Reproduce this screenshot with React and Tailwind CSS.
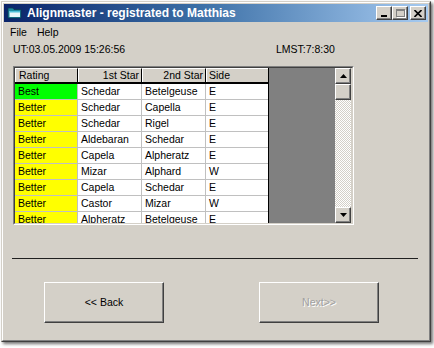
const rows = [
  ['Best', 'Schedar', 'Betelgeuse', 'E'],
  ['Better', 'Schedar', 'Capella', 'E'],
  ['Better', 'Schedar', 'Rigel', 'E'],
  ['Better', 'Aldebaran', 'Schedar', 'E'],
  ['Better', 'Capela', 'Alpheratz', 'E'],
  ['Better', 'Mizar', 'Alphard', 'W'],
  ['Better', 'Capela', 'Schedar', 'E'],
  ['Better', 'Castor', 'Mizar', 'W'],
  ['Better', 'Alpheratz', 'Betelgeuse', 'E'],
];

const raised =
  'border border-t-white border-l-white border-r-[#404040] border-b-[#404040] shadow-[inset_-1px_-1px_0_#808080] bg-[#d4d0c8]';

function TitleButton({ children, className = '' }) {
  return (
    <div className={`${raised} w-[16px] h-[14px] flex items-center justify-center ${className}`}>
      {children}
    </div>
  );
}

function Arrow({ up }) {
  return (
    <svg width="7" height="4" viewBox="0 0 7 4">
      {up ? <path d="M3.5 0 L7 4 L0 4 Z" fill="#000" /> : <path d="M0 0 L7 0 L3.5 4 Z" fill="#000" />}
    </svg>
  );
}

export default function App() {
  return (
    <div className="w-[434px] h-[348px] bg-white overflow-hidden" style={{ fontFamily: '"Liberation Sans", Arial, sans-serif' }}>
      <div className="ml-[1px] mt-[1px] w-[430px] h-[341px] border border-t-[#d4d0c8] border-l-[#d4d0c8] border-r-[#404040] border-b-[#404040] shadow-[2px_2px_3px_rgba(0,0,0,0.55)]">
        <div className="h-full border border-t-white border-l-white border-r-[#808080] border-b-[#808080] bg-[#d4d0c8] p-[1px] flex flex-col">
          {/* title bar */}
          <div className="h-[18px] flex items-center bg-[linear-gradient(90deg,#0a246a_0%,#3a6ea5_45%,#a6caf0_100%)] pl-[3px] pr-[2px]">
            <svg width="16" height="14" viewBox="0 0 16 14" className="mr-[4px]">
              <path d="M1 2 H6 L7 3.5 H14 V12 H1 Z" fill="#1c8aa0" stroke="#0a3a50" strokeWidth="0.8" />
              <path d="M2.5 5 H13 V11 H2.5 Z" fill="#e8f6fa" />
              <path d="M2.5 5 H13 V6.5 H2.5 Z" fill="#4fc0d8" />
            </svg>
            <span className="text-white font-bold text-[12px] leading-none">Alignmaster - registrated to Matthias</span>
            <div className="ml-auto flex items-center">
              <TitleButton>
                <div className="w-[6px] h-[2px] bg-black mt-[6px] -ml-[1px]" />
              </TitleButton>
              <TitleButton>
                <div className="w-[9px] h-[8px] border border-[#808080] border-t-2 shadow-[1px_1px_0_#fff]" />
              </TitleButton>
              <TitleButton className="ml-[2px]">
                <svg width="8" height="7" viewBox="0 0 8 7">
                  <path d="M0.5 0 L7.5 7 M7.5 0 L0.5 7" stroke="#000" strokeWidth="1.6" />
                </svg>
              </TitleButton>
            </div>
          </div>

          {/* menu */}
          <div className="mt-[3px] h-[16px] flex items-center text-[10.5px] text-black pl-[6px] gap-[10px]">
            <span>File</span>
            <span>Help</span>
          </div>

          {/* status line */}
          <div className="mt-[2px] h-[14px] flex items-center text-[10.5px] text-black pl-[9px]">
            <span className="w-[263px]">UT:03.05.2009 15:26:56</span>
            <span>LMST:7:8:30</span>
          </div>

          {/* grid */}
          <div className="mt-[9px] ml-[9px] w-[341px] h-[159px] border border-t-[#808080] border-l-[#808080] border-r-white border-b-white">
            <div className="h-full border border-t-[#404040] border-l-[#404040] border-r-[#d4d0c8] border-b-[#d4d0c8] flex overflow-hidden text-[10.5px] text-black">
              <div className="w-[254px] bg-white border-r border-black flex flex-col">
                <div className="h-[16px] flex shrink-0 border-b-2 border-black">
                  <div className="w-[63px] bg-[#d4d0c8] border-r border-black border-t border-t-white border-l border-l-white pl-[3px] flex items-center">Rating</div>
                  <div className="w-[64px] bg-[#d4d0c8] border-r border-black border-t border-t-white border-l border-l-white pr-[2px] flex items-center justify-end">1st Star</div>
                  <div className="w-[64px] bg-[#d4d0c8] border-r border-black border-t border-t-white border-l border-l-white pr-[2px] flex items-center justify-end">2nd Star</div>
                  <div className="flex-1 bg-[#d4d0c8] border-t border-t-white border-l border-l-white pl-[2px] flex items-center">Side</div>
                </div>
                {rows.map((r, i) => (
                  <div key={i} className="h-[16px] flex shrink-0 border-b border-[#c0c0c0]">
                    <div className={`w-[63px] border-r border-[#c0c0c0] pl-[3px] flex items-center ${i === 0 ? 'bg-[#00ff00]' : 'bg-[#ffff00]'}`}>{r[0]}</div>
                    <div className="w-[64px] border-r border-[#c0c0c0] pl-[3px] flex items-center">{r[1]}</div>
                    <div className="w-[64px] border-r border-[#c0c0c0] pl-[3px] flex items-center">{r[2]}</div>
                    <div className="flex-1 pl-[3px] flex items-center">{r[3]}</div>
                  </div>
                ))}
              </div>
              <div className="w-[66px] bg-[#808080]" />
              <div className="w-[16px] flex flex-col">
                <div className={`${raised} h-[16px] flex items-center justify-center shrink-0`}>
                  <Arrow up />
                </div>
                <div className={`${raised} h-[16px] shrink-0`} />
                <div className="flex-1 bg-[repeating-conic-gradient(#d4d0c8_0%_25%,#ffffff_0%_50%)] bg-[length:2px_2px]" />
                <div className={`${raised} h-[16px] flex items-center justify-center shrink-0`}>
                  <Arrow />
                </div>
              </div>
            </div>
          </div>

          {/* separator */}
          <div className="mt-[33px] ml-[8px] w-[406px] h-[1px] bg-[#202020]" />

          {/* buttons */}
          <div className="mt-[23px] flex pl-[40px] gap-[95px] text-[10.5px]">
            <div className={`${raised} w-[120px] h-[41px] flex items-center justify-center text-black`}>&lt;&lt; Back</div>
            <div className={`${raised} w-[120px] h-[41px] flex items-center justify-center text-[#a0a0a0] [text-shadow:1px_1px_0_#fff]`}>Next&gt;&gt;</div>
          </div>
        </div>
      </div>
    </div>
  );
}
